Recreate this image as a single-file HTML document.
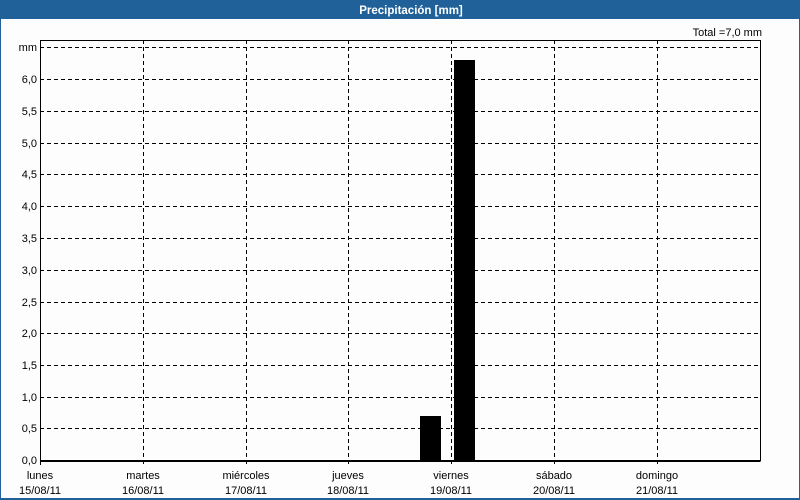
<!DOCTYPE html>
<html><head><meta charset="utf-8"><style>
body{margin:0;width:800px;height:500px;overflow:hidden;background:#fff;font-family:"Liberation Sans","DejaVu Sans",sans-serif;}
</style></head><body>
<svg width="800" height="500" xmlns="http://www.w3.org/2000/svg" style="display:block" font-family="Liberation Sans, DejaVu Sans, sans-serif">
<rect x="0" y="0" width="800" height="500" fill="#fdfdfd"/>
<rect x="0" y="0" width="800" height="19" fill="#1f6198"/>
<rect x="0" y="0" width="1" height="500" fill="#1f6198"/>
<rect x="799" y="0" width="1" height="500" fill="#1f6198"/>
<rect x="0" y="498" width="800" height="2" fill="#1f6198"/>
<text x="411" y="14" text-anchor="middle" fill="#fff" font-size="11.5" font-weight="bold">Precipitación [mm]</text>
<text x="762" y="36" text-anchor="end" fill="#000" font-size="11">Total =7,0 mm</text>
<g stroke="#000" stroke-width="1" stroke-dasharray="4,3" shape-rendering="crispEdges">
<line x1="40" x2="760" y1="47.5" y2="47.5"/>
<line x1="40" x2="760" y1="79.5" y2="79.5"/>
<line x1="40" x2="760" y1="111.5" y2="111.5"/>
<line x1="40" x2="760" y1="143.5" y2="143.5"/>
<line x1="40" x2="760" y1="174.5" y2="174.5"/>
<line x1="40" x2="760" y1="206.5" y2="206.5"/>
<line x1="40" x2="760" y1="238.5" y2="238.5"/>
<line x1="40" x2="760" y1="270.5" y2="270.5"/>
<line x1="40" x2="760" y1="302.5" y2="302.5"/>
<line x1="40" x2="760" y1="333.5" y2="333.5"/>
<line x1="40" x2="760" y1="365.5" y2="365.5"/>
<line x1="40" x2="760" y1="397.5" y2="397.5"/>
<line x1="40" x2="760" y1="428.5" y2="428.5"/>
<line x1="143.5" x2="143.5" y1="40" y2="465"/>
<line x1="246.5" x2="246.5" y1="40" y2="465"/>
<line x1="348.5" x2="348.5" y1="40" y2="465"/>
<line x1="451.5" x2="451.5" y1="40" y2="465"/>
<line x1="554.5" x2="554.5" y1="40" y2="465"/>
<line x1="657.5" x2="657.5" y1="40" y2="465"/>
</g>
<rect x="420" y="416" width="21" height="45" fill="#000"/>
<rect x="454" y="60" width="21" height="401" fill="#000"/>
<g stroke="#000" stroke-width="1" fill="none" shape-rendering="crispEdges">
<path d="M40.5 40.5 H760.5 V460.5 H40.5 Z"/>
<line x1="40.5" x2="40.5" y1="460" y2="465"/>
<line x1="40.5" x2="760.5" y1="461.5" y2="461.5"/>
</g>
<g font-size="11" fill="#000" text-anchor="end">
<text x="37" y="51">mm</text>
<text x="37" y="83">6,0</text>
<text x="37" y="115">5,5</text>
<text x="37" y="147">5,0</text>
<text x="37" y="178">4,5</text>
<text x="37" y="210">4,0</text>
<text x="37" y="242">3,5</text>
<text x="37" y="274">3,0</text>
<text x="37" y="306">2,5</text>
<text x="37" y="337">2,0</text>
<text x="37" y="369">1,5</text>
<text x="37" y="401">1,0</text>
<text x="37" y="432">0,5</text>
<text x="37" y="464">0,0</text>
</g>
<g font-size="11" fill="#000" text-anchor="middle">
<text x="40" y="479">lunes</text><text x="40" y="494">15/08/11</text>
<text x="143" y="479">martes</text><text x="143" y="494">16/08/11</text>
<text x="246" y="479">miércoles</text><text x="246" y="494">17/08/11</text>
<text x="348" y="479">jueves</text><text x="348" y="494">18/08/11</text>
<text x="451" y="479">viernes</text><text x="451" y="494">19/08/11</text>
<text x="554" y="479">sábado</text><text x="554" y="494">20/08/11</text>
<text x="657" y="479">domingo</text><text x="657" y="494">21/08/11</text>
</g>
</svg>
</body></html>
